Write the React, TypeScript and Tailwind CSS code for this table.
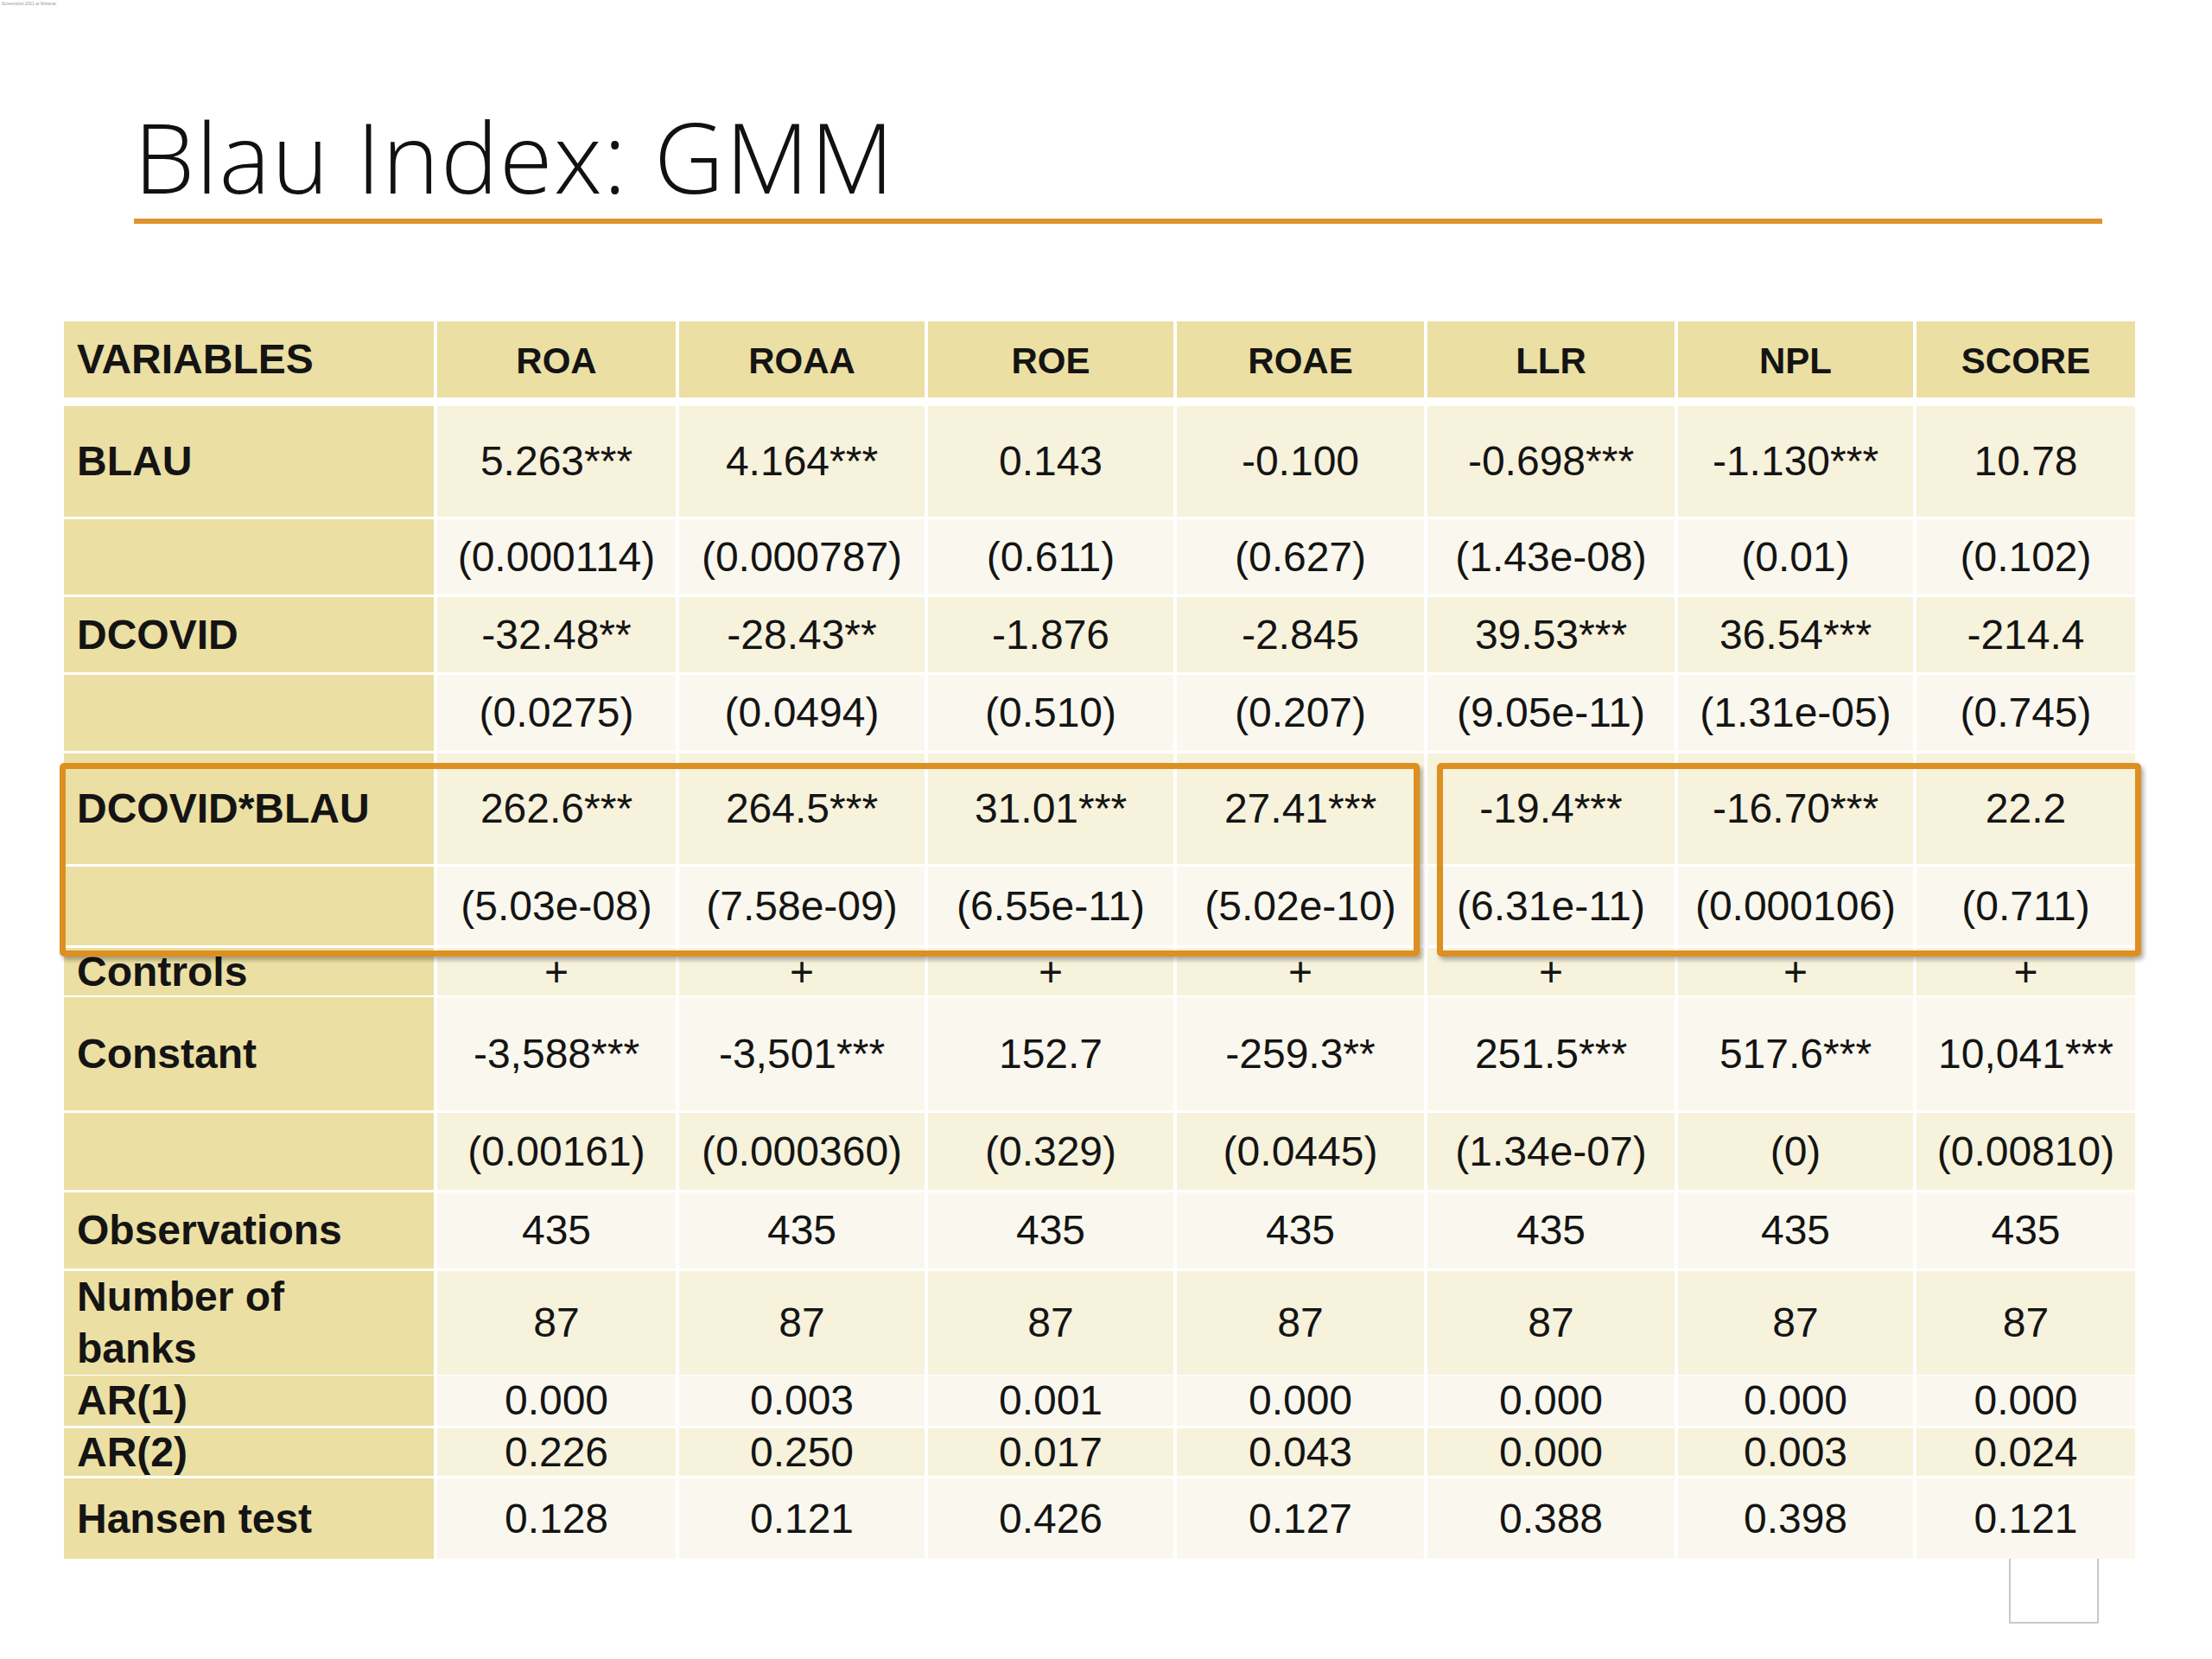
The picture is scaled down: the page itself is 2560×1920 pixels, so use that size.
import React from 'react';

type Row = {
  label: string;
  values: string[];
  h: number;
};

const COLUMNS = ['ROA', 'ROAA', 'ROE', 'ROAE', 'LLR', 'NPL', 'SCORE'];

const ROWS: Row[] = [
  { label: 'BLAU', h: 128, values: ['5.263***', '4.164***', '0.143', '-0.100', '-0.698***', '-1.130***', '10.78'] },
  { label: '', h: 87, values: ['(0.000114)', '(0.000787)', '(0.611)', '(0.627)', '(1.43e-08)', '(0.01)', '(0.102)'] },
  { label: 'DCOVID', h: 87, values: ['-32.48**', '-28.43**', '-1.876', '-2.845', '39.53***', '36.54***', '-214.4'] },
  { label: '', h: 88, values: ['(0.0275)', '(0.0494)', '(0.510)', '(0.207)', '(9.05e-11)', '(1.31e-05)', '(0.745)'] },
  { label: 'DCOVID*BLAU', h: 128, values: ['262.6***', '264.5***', '31.01***', '27.41***', '-19.4***', '-16.70***', '22.2'] },
  { label: '', h: 91, values: ['(5.03e-08)', '(7.58e-09)', '(6.55e-11)', '(5.02e-10)', '(6.31e-11)', '(0.000106)', '(0.711)'] },
  { label: 'Controls', h: 54, values: ['+', '+', '+', '+', '+', '+', '+'] },
  { label: 'Constant', h: 131, values: ['-3,588***', '-3,501***', '152.7', '-259.3**', '251.5***', '517.6***', '10,041***'] },
  { label: '', h: 89, values: ['(0.00161)', '(0.000360)', '(0.329)', '(0.0445)', '(1.34e-07)', '(0)', '(0.00810)'] },
  { label: 'Observations', h: 88, values: ['435', '435', '435', '435', '435', '435', '435'] },
  { label: 'Number of banks', h: 118, values: ['87', '87', '87', '87', '87', '87', '87'] },
  { label: 'AR(1)', h: 58, values: ['0.000', '0.003', '0.001', '0.000', '0.000', '0.000', '0.000'] },
  { label: 'AR(2)', h: 55, values: ['0.226', '0.250', '0.017', '0.043', '0.000', '0.003', '0.024'] },
  { label: 'Hansen test', h: 93, values: ['0.128', '0.121', '0.426', '0.127', '0.388', '0.398', '0.121'] },
];

const GRID = 'grid grid-cols-[428px_276px_284px_284px_286px_286px_272px_253px] gap-x-[4px]';

function Label({ text }: { text: string }) {
  // the original slide wraps this one label onto two lines
  if (text === 'Number of banks') {
    return (
      <span className="leading-[60px]">
        Number of
        <br />
        banks
      </span>
    );
  }
  return <span className="leading-[1.15]">{text}</span>;
}

export default function App() {
  return (
    <div className="w-[2560px] h-[1920px] bg-white font-['Liberation_Sans',Arial,sans-serif] text-[#141414]">
      <div className="h-[8px] pl-[2px] text-[5px] leading-[8px] text-[#9a9a9a]">Screenshot 2021 at Webinar</div>

      {/* Titulo */}
      <div className="pl-[155px] pt-[117px]">
        <h1 className="h-[112px] text-[112px] leading-none font-light font-['Open_Sans','DejaVu_Sans',sans-serif] text-[#111] tracking-[1.5px]">
          Blau Index: GMM
        </h1>
      </div>
      <div className="ml-[155px] mt-[16px] w-[2278px] h-[6px] bg-[#e0952c]" />

      {/* Tabela */}
      <div className="relative ml-[74px] mt-[113px] w-[2397px]">
        <div className={`${GRID} h-[88px]`}>
          <div className="bg-[#ebdfa3] flex items-center pl-[15px] text-[48px] font-bold">VARIABLES</div>
          {COLUMNS.map((c) => (
            <div key={c} className="bg-[#ebdfa3] flex items-center justify-center text-[42px] font-bold pt-[2px]">
              {c}
            </div>
          ))}
        </div>

        <div className="mt-[10px] flex flex-col gap-y-[3px]">
          {ROWS.map((row, i) => (
            <div key={i} className={GRID} style={{ height: row.h }}>
              <div className="bg-[#ebdfa3] flex items-center pl-[15px] text-[48px] font-bold">
                <Label text={row.label} />
              </div>
              {row.values.map((v, j) => (
                <div
                  key={j}
                  className={`flex items-center justify-center text-[48px] leading-[1.15] ${
                    i % 2 === 0 ? 'bg-[#f6f2dc]' : 'bg-[#faf8ee]'
                  }`}
                >
                  {v}
                </div>
              ))}
            </div>
          ))}
        </div>

        {/* Destaques */}
        <div className="absolute left-[-5px] top-[511px] w-[1574px] h-[224px] border-[7px] border-[#dd8f22] rounded-[5px] shadow-[3px_4px_5px_rgba(0,0,0,0.3)]" />
        <div className="absolute left-[1589px] top-[511px] w-[815px] h-[224px] border-[7px] border-[#dd8f22] rounded-[5px] shadow-[3px_4px_5px_rgba(0,0,0,0.3)]" />
      </div>

      <div className="ml-[2325px] w-[104px] h-[75px] border-x-2 border-b-2 border-[#c8c8c8] rounded-b-[2px]" />
    </div>
  );
}
